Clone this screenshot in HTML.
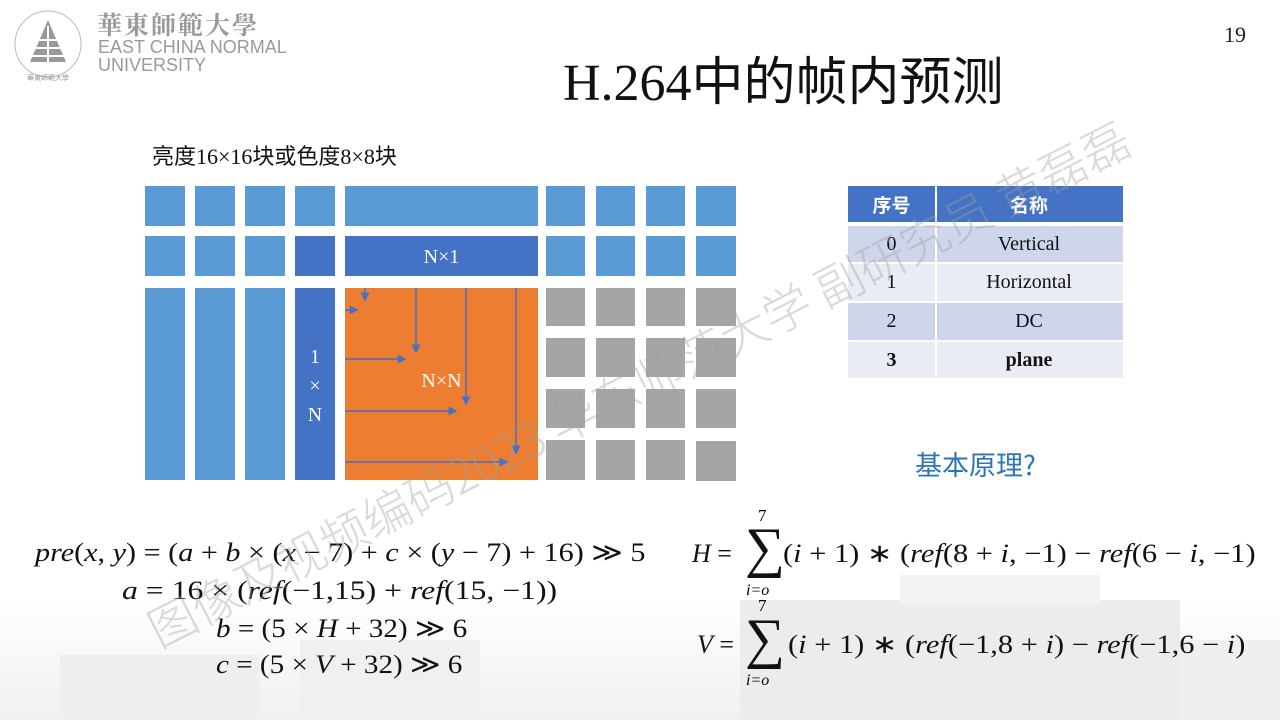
<!DOCTYPE html>
<html><head><meta charset="utf-8"><style>
*{margin:0;padding:0;box-sizing:border-box}
body{width:1280px;height:720px;overflow:hidden;background:#fff;position:relative;font-family:"Liberation Serif","Noto Serif CJK SC",serif}
.a{position:absolute}
.lb{background:#5B9BD5}.db{background:#4472C4}.gr{background:#A5A5A5}.or{background:#ED7D31}
.m{position:absolute;font-family:"Liberation Serif",serif;font-size:26px;color:#111;white-space:nowrap;transform-origin:0 0}
.m i{font-style:italic}
.t{position:absolute;left:848px;width:275px;font-size:20px;color:#111}
.t div{position:absolute;top:0;height:100%;display:flex;align-items:center;justify-content:center}
</style></head><body>
<div class="a" style="left:0;top:600px;width:1280px;height:120px;background:linear-gradient(#fff,#f0f0f0)"></div>
<div class="a" style="left:60px;top:655px;width:200px;height:65px;background:#efefef"></div>
<div class="a" style="left:300px;top:640px;width:180px;height:80px;background:#f0f0f0"></div>
<div class="a" style="left:740px;top:600px;width:440px;height:120px;background:#ececec"></div>
<div class="a" style="left:900px;top:575px;width:200px;height:30px;background:#f2f2f2"></div>
<div class="a" style="left:1180px;top:640px;width:100px;height:80px;background:#efefef"></div>

<svg class="a" style="left:8px;top:6px" width="80" height="80" viewBox="0 0 80 80">
<circle cx="40" cy="38" r="33" fill="none" stroke="#bbb" stroke-width="1"/>
<path d="M40 14 L22 56 L58 56 Z" fill="#999"/>
<path d="M40 20 L40 64 M28 34 L52 34 M25 42 L55 42 M22 50 L58 50" stroke="#fff" stroke-width="2"/>
<text x="40" y="74" font-size="7" fill="#999" text-anchor="middle" font-family="Noto Sans CJK SC">華東師範大學</text>
</svg>
<div class="a" style="left:97px;top:6px;font-family:'Noto Serif CJK SC',serif;font-size:25px;color:#999;letter-spacing:2px;font-weight:bold">華東師範大學</div>
<div class="a" style="left:98px;top:38px;font-family:'Liberation Sans',sans-serif;font-size:18px;line-height:18px;color:#9a9a9a">EAST CHINA NORMAL<br>UNIVERSITY</div>

<div class="a" style="left:1224px;top:22px;font-size:22px;color:#222">19</div>
<div class="a" style="left:563px;top:40px;font-size:52px;color:#111;font-family:'Liberation Serif','Noto Sans CJK SC',serif">H.264中的帧内预测</div>
<div class="a" style="left:152px;top:139px;font-size:22px;color:#111;font-family:'Liberation Serif','Noto Sans CJK SC',serif">亮度16×16块或色度8×8块</div>

<div class="a lb" style="left:145px;top:186px;width:40px;height:40px"></div>
<div class="a lb" style="left:195px;top:186px;width:40px;height:40px"></div>
<div class="a lb" style="left:245px;top:186px;width:40px;height:40px"></div>
<div class="a lb" style="left:295px;top:186px;width:40px;height:40px"></div>
<div class="a lb" style="left:345px;top:186px;width:193px;height:40px"></div>
<div class="a lb" style="left:546px;top:186px;width:39px;height:40px"></div>
<div class="a lb" style="left:596px;top:186px;width:39px;height:40px"></div>
<div class="a lb" style="left:646px;top:186px;width:39px;height:40px"></div>
<div class="a lb" style="left:696px;top:186px;width:40px;height:40px"></div>

<div class="a lb" style="left:145px;top:236px;width:40px;height:40px"></div>
<div class="a lb" style="left:195px;top:236px;width:40px;height:40px"></div>
<div class="a lb" style="left:245px;top:236px;width:40px;height:40px"></div>
<div class="a db" style="left:295px;top:236px;width:40px;height:40px"></div>
<div class="a db" style="left:345px;top:236px;width:193px;height:40px;color:#fff;font-size:20px;text-align:center;line-height:42px">N×1</div>
<div class="a lb" style="left:546px;top:236px;width:39px;height:40px"></div>
<div class="a lb" style="left:596px;top:236px;width:39px;height:40px"></div>
<div class="a lb" style="left:646px;top:236px;width:39px;height:40px"></div>
<div class="a lb" style="left:696px;top:236px;width:40px;height:40px"></div>

<div class="a lb" style="left:145px;top:288px;width:40px;height:192px"></div>
<div class="a lb" style="left:195px;top:288px;width:40px;height:192px"></div>
<div class="a lb" style="left:245px;top:288px;width:40px;height:192px"></div>
<div class="a db" style="left:295px;top:288px;width:40px;height:192px;color:#fff;font-size:20px;text-align:center;padding-top:55px;line-height:29px">1<br>×<br>N</div>
<div class="a or" style="left:345px;top:288px;width:193px;height:192px"></div>
<div class="a" style="left:345px;top:370px;width:193px;color:#fff;font-size:20px;text-align:center">N×N</div>

<div class="a gr" style="left:546px;top:288px;width:39px;height:38px"></div><div class="a gr" style="left:596px;top:288px;width:39px;height:38px"></div><div class="a gr" style="left:646px;top:288px;width:39px;height:38px"></div><div class="a gr" style="left:696px;top:288px;width:40px;height:38px"></div>
<div class="a gr" style="left:546px;top:338px;width:39px;height:39px"></div><div class="a gr" style="left:596px;top:338px;width:39px;height:39px"></div><div class="a gr" style="left:646px;top:338px;width:39px;height:39px"></div><div class="a gr" style="left:696px;top:338px;width:40px;height:39px"></div>
<div class="a gr" style="left:546px;top:389px;width:39px;height:39px"></div><div class="a gr" style="left:596px;top:389px;width:39px;height:39px"></div><div class="a gr" style="left:646px;top:389px;width:39px;height:39px"></div><div class="a gr" style="left:696px;top:389px;width:40px;height:39px"></div>
<div class="a gr" style="left:546px;top:440px;width:39px;height:40px"></div><div class="a gr" style="left:596px;top:440px;width:39px;height:40px"></div><div class="a gr" style="left:646px;top:440px;width:39px;height:40px"></div><div class="a gr" style="left:696px;top:441px;width:40px;height:40px"></div>

<svg class="a" style="left:0;top:0" width="1280" height="720">
<defs><marker id="ah" markerWidth="6" markerHeight="6" refX="5" refY="3" orient="auto"><path d="M0 0 L6 3 L0 6 Z" fill="#4472C4"/></marker></defs>
<g stroke="#4472C4" stroke-width="1.5" marker-end="url(#ah)">
<line x1="365" y1="288" x2="365" y2="300"/>
<line x1="416" y1="288" x2="416" y2="352"/>
<line x1="466" y1="288" x2="466" y2="404"/>
<line x1="516" y1="288" x2="516" y2="453"/>
<line x1="345" y1="310" x2="357" y2="310"/>
<line x1="345" y1="359" x2="405" y2="359"/>
<line x1="345" y1="411" x2="456" y2="411"/>
<line x1="345" y1="462" x2="507" y2="462"/>
</g></svg>

<div class="t" style="top:186px;height:36px;background:#4472C4;color:#fff;font-weight:bold;font-family:'Noto Sans CJK SC',sans-serif;font-size:19px"><div style="left:0;width:87px">序号</div><div style="left:87px;width:188px">名称</div></div>
<div class="t" style="top:226px;height:36px;background:#CFD5EA"><div style="left:0;width:87px">0</div><div style="left:87px;width:188px">Vertical</div></div>
<div class="t" style="top:264px;height:37px;background:#E9EBF5"><div style="left:0;width:87px">1</div><div style="left:87px;width:188px">Horizontal</div></div>
<div class="t" style="top:303px;height:37px;background:#CFD5EA"><div style="left:0;width:87px">2</div><div style="left:87px;width:188px">DC</div></div>
<div class="t" style="top:342px;height:36px;background:#E9EBF5;font-weight:bold"><div style="left:0;width:87px">3</div><div style="left:87px;width:188px">plane</div></div>
<div class="a" style="left:935px;top:186px;width:2px;height:192px;background:#fff"></div>
<div class="a" style="left:848px;top:222px;width:275px;height:4px;background:#fff"></div>

<div class="a" style="left:915px;top:444px;font-size:27px;color:#2E75B6;font-family:'Noto Sans CJK SC',sans-serif">基本原理?</div>

<div class="m" style="left:35px;top:538px;transform:scaleX(1.16)"><i>pre</i>(<i>x</i>, <i>y</i>) = (<i>a</i> + <i>b</i> × (<i>x</i> − 7) + <i>c</i> × (<i>y</i> − 7) + 16) ≫ 5</div>
<div class="m" style="left:122px;top:576px;transform:scaleX(1.22)"><i>a</i> = 16 × (<i>ref</i>(−1,15) + <i>ref</i>(15, −1))</div>
<div class="m" style="left:216px;top:614px;transform:scaleX(1.12)"><i>b</i> = (5 × <i>H</i> + 32) ≫ 6</div>
<div class="m" style="left:216px;top:650px;transform:scaleX(1.12)"><i>c</i> = (5 × <i>V</i> + 32) ≫ 6</div>

<div class="m" style="left:692px;top:539px"><i>H</i> =</div>
<div class="m" style="left:745px;top:520px;font-size:56px;line-height:56px">∑</div>
<div class="a" style="left:758px;top:506px;font-size:17px">7</div>
<div class="a" style="left:746px;top:582px;font-size:16px;font-style:italic">i=o</div>
<div class="m" style="left:783px;top:539px;transform:scaleX(1.17)">(<i>i</i> + 1) ∗ (<i>ref</i>(8 + <i>i</i>, −1) − <i>ref</i>(6 − <i>i</i>, −1)</div>

<div class="m" style="left:697px;top:630px"><i>V</i> =</div>
<div class="m" style="left:745px;top:611px;font-size:56px;line-height:56px">∑</div>
<div class="a" style="left:758px;top:596px;font-size:17px">7</div>
<div class="a" style="left:746px;top:672px;font-size:16px;font-style:italic">i=o</div>
<div class="m" style="left:788px;top:630px;transform:scaleX(1.17)">(<i>i</i> + 1) ∗ (<i>ref</i>(−1,8 + <i>i</i>) − <i>ref</i>(−1,6 − <i>i</i>)</div>

<div class="a" style="left:150px;top:345px;width:1200px;transform-origin:0 50%;transform:translate(0,250px) rotate(-27deg);font-family:'Noto Sans CJK SC',sans-serif;font-size:48px;color:rgba(160,160,160,0.4);white-space:nowrap;font-weight:300">图像及视频编码2023 华东师范大学 副研究员 黄磊磊</div>
</body></html>
